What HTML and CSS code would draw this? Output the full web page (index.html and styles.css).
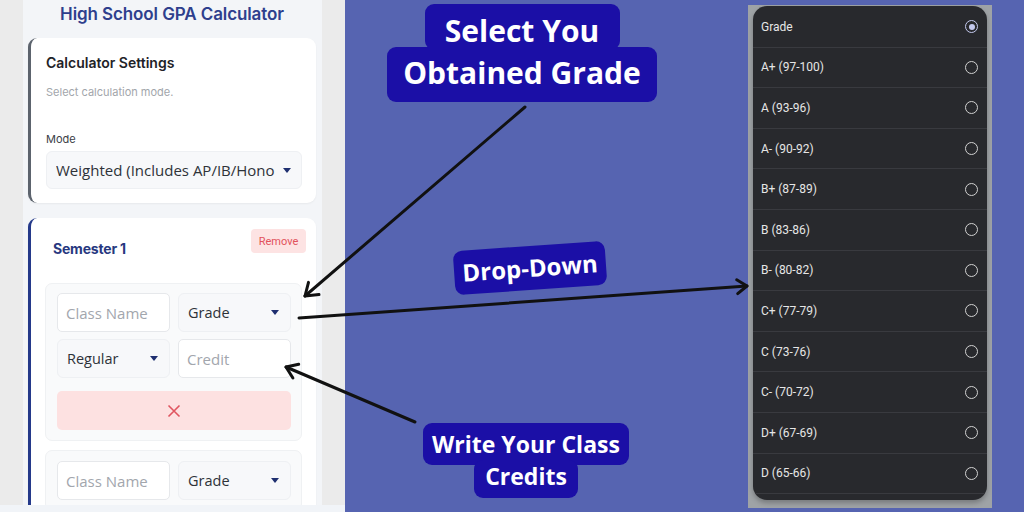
FILE: index.html
```html
<!DOCTYPE html>
<html lang="en">
<head>
<meta charset="utf-8">
<title>High School GPA Calculator</title>
<link rel="stylesheet" href="styles.css">
</head>
<body>
<div class="app">
  <div class="left">
    <div class="column">
      <h1 class="title">High School GPA Calculator</h1>
      <section class="card settings">
        <h2 class="card-title">Calculator Settings</h2>
        <p class="card-sub">Select calculation mode.</p>
        <label class="field-label">Mode</label>
        <div class="select wide"><span class="select-text">Weighted (Includes AP/IB/Hono</span><span class="caret"></span></div>
      </section>
      <section class="card semester">
        <div class="sem-head">
          <h2 class="sem-title">Semester 1</h2>
          <button class="remove">Remove</button>
        </div>
        <div class="class-box">
          <div class="input">Class Name</div>
          <div class="select"><span class="select-text">Grade</span><span class="caret"></span></div>
          <div class="select"><span class="select-text">Regular</span><span class="caret"></span></div>
          <div class="input">Credit</div>
          <button class="delete">
            <svg width="14" height="14" viewBox="0 0 14 14"><path d="M1.5 1.5 L12.5 12.5 M12.5 1.5 L1.5 12.5" stroke="#e05560" stroke-width="1.6" fill="none"/></svg>
          </button>
        </div>
        <div class="class-box second">
          <div class="input">Class Name</div>
          <div class="select"><span class="select-text">Grade</span><span class="caret"></span></div>
        </div>
      </section>
    </div>
    <div class="bottom-strip"></div>
  </div>

  <div class="canvas">
    <div class="label label-select">
      <span class="lbl-line l1">Select You</span>
      <span class="lbl-line l2">Obtained Grade</span>
    </div>
    <div class="label label-drop">
      <span class="lbl-line">Drop-Down</span>
    </div>
    <div class="label label-credit">
      <span class="lbl-line c1">Write Your Class</span>
      <span class="lbl-line c2">Credits</span>
    </div>

    <div class="phone">
      <ul class="dropdown">
        <li class="opt"><span>Grade</span><span class="radio on"></span></li>
        <li class="opt"><span>A+ (97-100)</span><span class="radio"></span></li>
        <li class="opt"><span>A (93-96)</span><span class="radio"></span></li>
        <li class="opt"><span>A- (90-92)</span><span class="radio"></span></li>
        <li class="opt"><span>B+ (87-89)</span><span class="radio"></span></li>
        <li class="opt"><span>B (83-86)</span><span class="radio"></span></li>
        <li class="opt"><span>B- (80-82)</span><span class="radio"></span></li>
        <li class="opt"><span>C+ (77-79)</span><span class="radio"></span></li>
        <li class="opt"><span>C (73-76)</span><span class="radio"></span></li>
        <li class="opt"><span>C- (70-72)</span><span class="radio"></span></li>
        <li class="opt"><span>D+ (67-69)</span><span class="radio"></span></li>
        <li class="opt"><span>D (65-66)</span><span class="radio"></span></li>
      </ul>
    </div>
  </div>

  <svg class="arrows" width="1024" height="512" viewBox="0 0 1024 512">
    <g stroke="#111" stroke-width="3" fill="none" stroke-linecap="round" stroke-linejoin="round">
      <path d="M525 107 L305 296"/>
      <path d="M319 294.6 L305 296 L308.5 282.4"/>
      <path d="M299 318 L747 286"/>
      <path d="M736.7 279.8 L747 286 L737.7 293.6"/>
      <path d="M415 422 L286 367"/>
      <path d="M292.9 378 L286 367 L298.7 364.3"/>
    </g>
  </svg>
</div>
</body>
</html>
```

FILE: styles.css
```css
* { box-sizing: border-box; }
html, body { margin: 0; padding: 0; }
body {
  width: 1024px;
  height: 512px;
  overflow: hidden;
  font-family: "Open Sans", "Liberation Sans", sans-serif;
}
.app {
  position: relative;
  display: flex;
  width: 1024px;
  height: 512px;
  background: #5664b1;
}

/* ---------- left app screenshot ---------- */
.left {
  width: 345px;
  height: 512px;
  display: flex;
  flex-direction: column;
  background: #ebebeb;
}
.column {
  flex: 1;
  overflow: hidden;
  margin: 0 23px;
  padding: 0 6px 0 5px;
  background: #f3f5f8;
}
.title {
  margin: 0;
  height: 28px;
  line-height: 28px;
  text-align: center;
  font-family: Inter, "Liberation Sans", sans-serif;
  font-size: 17px;
  font-weight: 600;
  color: #2e3f8d;
  letter-spacing: -0.1px;
}
.card {
  background: #fff;
  border-radius: 9px;
  box-shadow: 0 1px 2px rgba(0,0,0,0.05);
}
.settings {
  margin-top: 10px;
  height: 165px;
  border-left: 3px solid #5c636d;
  padding: 14px 14px 14px 15px;
}
.card-title {
  margin: 0;
  line-height: 22px;
  font-family: Inter, "Liberation Sans", sans-serif;
  font-size: 14px;
  font-weight: 600;
  color: #1e2227;
}
.card-sub {
  margin: 10px 0 0;
  line-height: 16px;
  font-family: Inter, "Liberation Sans", sans-serif;
  font-size: 11px;
  color: #a2a6ab;
}
.field-label {
  display: block;
  margin-top: 31px;
  line-height: 16px;
  font-family: Inter, "Liberation Sans", sans-serif;
  font-size: 11px;
  color: #3b4046;
}
.select {
  display: flex;
  align-items: center;
  justify-content: space-between;
  height: 39px;
  padding: 0 9px 0 9px;
  background: #f7f8fa;
  border: 1px solid #eef0f3;
  border-radius: 6px;
  font-size: 14.5px;
  color: #2e3238;
}
.select.wide {
  margin-top: 4px;
  height: 38px;
  padding-right: 8px;
  font-size: 15px;
}
.select-text { white-space: nowrap; overflow: hidden; }
.caret {
  flex: none;
  width: 0;
  height: 0;
  border-left: 4.5px solid transparent;
  border-right: 4.5px solid transparent;
  border-top: 5px solid #1f2f70;
  margin-right: 2px;
}

.semester {
  margin-top: 15px;
  height: 330px;
  border-left: 3px solid #24398a;
  padding: 11px 14px 0 14px;
}
.sem-head {
  display: flex;
  justify-content: space-between;
  align-items: flex-start;
}
.sem-title {
  margin: 10px 0 0 8px;
  line-height: 20px;
  font-family: Inter, "Liberation Sans", sans-serif;
  font-size: 14px;
  font-weight: 700;
  color: #27387f;
  letter-spacing: -0.2px;
}
.remove {
  margin-right: -4px;
  width: 55px;
  height: 24px;
  padding: 0;
  border: none;
  border-radius: 4px;
  background: #fde3e3;
  color: #e2525c;
  font-family: Roboto, "Liberation Sans", sans-serif;
  font-size: 11px;
}
.class-box {
  margin-top: 24px;
  display: grid;
  grid-template-columns: 113px 113px;
  column-gap: 8px;
  row-gap: 7px;
  padding: 9px 10px 10px 11px;
  background: #f9fafb;
  border: 1px solid #eff1f3;
  border-radius: 7px;
}
.class-box.second {
  margin-top: 9px;
  padding-top: 10px;
}
.input {
  height: 39px;
  display: flex;
  align-items: center;
  padding-left: 8px;
  background: #fff;
  border: 1px solid #e6e8eb;
  border-radius: 5px;
  font-size: 15px;
  color: #a2a6ad;
  white-space: nowrap;
}
.delete {
  grid-column: 1 / 3;
  margin-top: 6px;
  height: 39px;
  border: none;
  border-radius: 5px;
  background: #fde1e1;
  display: flex;
  align-items: center;
  justify-content: center;
  padding: 0;
}
.bottom-strip {
  height: 7px;
  background: #f1f4f8;
}

/* ---------- blue canvas ---------- */
.canvas {
  position: relative;
  flex: 1;
  height: 512px;
}
.label {
  position: absolute;
  display: flex;
  flex-direction: column;
  align-items: center;
  color: #fff;
  font-family: "Open Sans", "Liberation Sans", sans-serif;
  font-weight: 700;
}
.lbl-line {
  display: block;
  background: #1b0fa6;
  border-radius: 9px;
  text-align: center;
  white-space: nowrap;
}
.label-select {
  left: 42px;
  top: 4px;
  width: 270px;
  font-size: 30px;
}
.label-select .l1 {
  width: 195px;
  height: 46px;
  padding-top: 5px;
  line-height: 44px;
}
.label-select .l2 {
  margin-top: -3px;
  width: 270px;
  height: 55px;
  padding-top: 4px;
  line-height: 44px;
}
.label-drop {
  left: 109px;
  top: 246px;
  width: 152px;
  font-size: 24px;
  transform: rotate(-4deg);
}
.label-drop .lbl-line {
  width: 152px;
  height: 44px;
  line-height: 44px;
}
.label-credit {
  left: 78px;
  top: 423px;
  width: 206px;
  font-size: 23px;
}
.label-credit .c1 {
  width: 206px;
  height: 42px;
  line-height: 42px;
}
.label-credit .c2 {
  margin-top: -5px;
  width: 104px;
  height: 38px;
  line-height: 33px;
}

.phone {
  position: absolute;
  left: 403px;
  top: 5px;
  width: 244px;
  height: 503px;
  background: #9fa3a6;
  padding: 1px 5px 0 5px;
}
.dropdown {
  list-style: none;
  margin: 0;
  padding: 1px 0 0;
  width: 234px;
  height: 494px;
  overflow: hidden;
  background: #28292d;
  border-radius: 14px;
  box-shadow: 0 3px 5px rgba(0,0,0,0.25);
}
.opt {
  height: 40.6px;
  display: flex;
  align-items: center;
  justify-content: space-between;
  padding: 0 9px 0 8px;
  border-bottom: 1px solid #393a3f;
  font-family: Roboto, "Liberation Sans", sans-serif;
  font-size: 12px;
  color: #e6e6e6;
}
.radio {
  width: 13px;
  height: 13px;
  border: 1.5px solid #d2d2d2;
  border-radius: 50%;
  display: flex;
  align-items: center;
  justify-content: center;
}
.radio.on { border-color: #c4c9ee; }
.radio.on::after {
  content: "";
  width: 6px;
  height: 6px;
  border-radius: 50%;
  background: #c4c9ee;
}

.arrows {
  position: absolute;
  left: 0;
  top: 0;
  pointer-events: none;
}
```
